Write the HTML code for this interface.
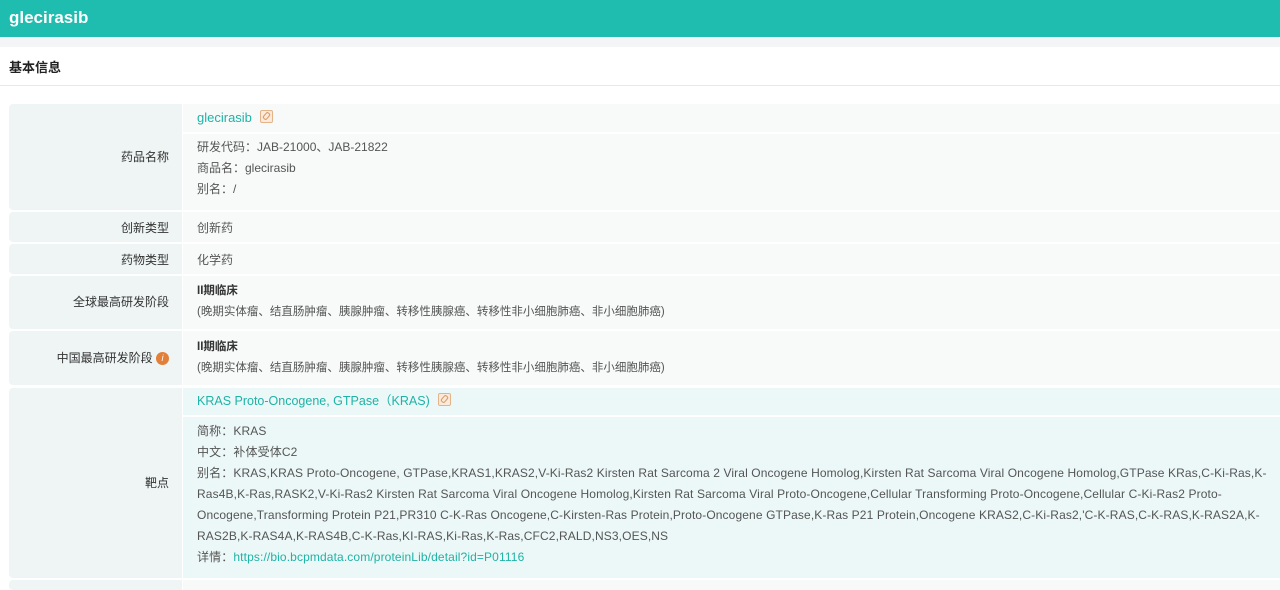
<!DOCTYPE html>
<html><head><meta charset="utf-8"><style>
*{margin:0;padding:0;box-sizing:border-box}
body{width:1280px;height:585px;overflow:hidden;background:#fff;font-family:"Liberation Sans","Noto Sans CJK SC",sans-serif;font-size:12px;color:#555;position:relative}
.hdr{position:absolute;left:0;top:0;width:1280px;height:37px;background:#1fbdb0;color:#fff;font-weight:bold;font-size:17px;padding:8px 0 0 9px}
.strip{position:absolute;left:0;top:37px;width:1280px;height:10px;background:#f3f5f6}
.sec{position:absolute;left:0;top:47px;width:1280px;height:39px;border-bottom:1px solid #e8e8e8;font-weight:bold;color:#222;font-size:13px;padding:10px 0 0 9px}
.lab{position:absolute;left:9px;width:173px;background:#eef5f4;border-radius:4px 0 0 4px;text-align:right;padding-right:13px;color:#333}
.cnt{position:absolute;left:183px;width:1097px;background:#f8fafa;padding-left:14px}
.lk{color:#1fb3a6}
.ic{display:inline-block;width:13px;height:13px;border:1.5px solid #e3b48a;border-radius:2px;vertical-align:-1px;margin-left:8px;background:#fbeadb;position:relative}
.ic:after{content:"";position:absolute;left:3px;top:1px;width:3px;height:6px;border:1px solid #d99a66;border-radius:2px;transform:rotate(40deg)}
b{color:#333}
.nw{white-space:nowrap}
</style></head><body>
<div class="hdr">glecirasib</div>
<div class="strip"></div>
<div class="sec">基本信息</div>

<div class="lab" style="top:104px;height:106px;line-height:106px">药品名称</div>
<div class="cnt" style="top:104px;height:28px;line-height:28px"><span class="lk" style="font-size:13px">glecirasib</span><span class="ic"></span></div>
<div class="cnt" style="top:134px;height:76px;padding-top:3px;line-height:21px">研发代码：JAB-21000、JAB-21822<br>商品名：glecirasib<br>别名：/</div>

<div class="lab" style="top:212px;height:30px;line-height:32px">创新类型</div>
<div class="cnt" style="top:212px;height:30px;line-height:32px">创新药</div>
<div class="lab" style="top:244px;height:30px;line-height:32px">药物类型</div>
<div class="cnt" style="top:244px;height:30px;line-height:32px">化学药</div>

<div class="lab" style="top:276px;height:53px;line-height:53px">全球最高研发阶段</div>
<div class="cnt" style="top:276px;height:53px;padding-top:5px;line-height:21px;font-size:11.5px"><b>II期临床</b><br>(晚期实体瘤、结直肠肿瘤、胰腺肿瘤、转移性胰腺癌、转移性非小细胞肺癌、非小细胞肺癌)</div>
<div class="lab" style="top:331px;height:54px;line-height:54px">中国最高研发阶段 <span style="display:inline-block;width:13px;height:13px;border-radius:50%;background:#e2803a;color:#fff;font-size:9px;line-height:13px;text-align:center;vertical-align:1px;font-style:italic">i</span></div>
<div class="cnt" style="top:331px;height:54px;padding-top:6px;line-height:21px;font-size:11.5px"><b>II期临床</b><br>(晚期实体瘤、结直肠肿瘤、胰腺肿瘤、转移性胰腺癌、转移性非小细胞肺癌、非小细胞肺癌)</div>

<div class="lab" style="top:388px;height:190px;line-height:190px">靶点</div>
<div class="cnt" style="top:388px;height:27px;line-height:26px;background:#ecf7f7"><span class="lk" style="font-size:12.5px">KRAS Proto-Oncogene, GTPase（KRAS)</span><span class="ic"></span></div>
<div class="cnt nw" style="top:417px;height:161px;background:#ecf7f7;padding-top:4px;line-height:21px;letter-spacing:0.12px">简称：KRAS<br>中文：补体受体C2<br>别名：KRAS,KRAS Proto-Oncogene, GTPase,KRAS1,KRAS2,V-Ki-Ras2 Kirsten Rat Sarcoma 2 Viral Oncogene Homolog,Kirsten Rat Sarcoma Viral Oncogene Homolog,GTPase KRas,C-Ki-Ras,K-<br>Ras4B,K-Ras,RASK2,V-Ki-Ras2 Kirsten Rat Sarcoma Viral Oncogene Homolog,Kirsten Rat Sarcoma Viral Proto-Oncogene,Cellular Transforming Proto-Oncogene,Cellular C-Ki-Ras2 Proto-<br>Oncogene,Transforming Protein P21,PR310 C-K-Ras Oncogene,C-Kirsten-Ras Protein,Proto-Oncogene GTPase,K-Ras P21 Protein,Oncogene KRAS2,C-Ki-Ras2,'C-K-RAS,C-K-RAS,K-RAS2A,K-<br>RAS2B,K-RAS4A,K-RAS4B,C-K-Ras,KI-RAS,Ki-Ras,K-Ras,CFC2,RALD,NS3,OES,NS<br>详情：<span class="lk">https://bio.bcpmdata.com/proteinLib/detail?id=P01116</span></div>

<div class="lab" style="top:580px;height:10px"></div>
<div class="cnt" style="top:580px;height:10px"></div>
</body></html>
